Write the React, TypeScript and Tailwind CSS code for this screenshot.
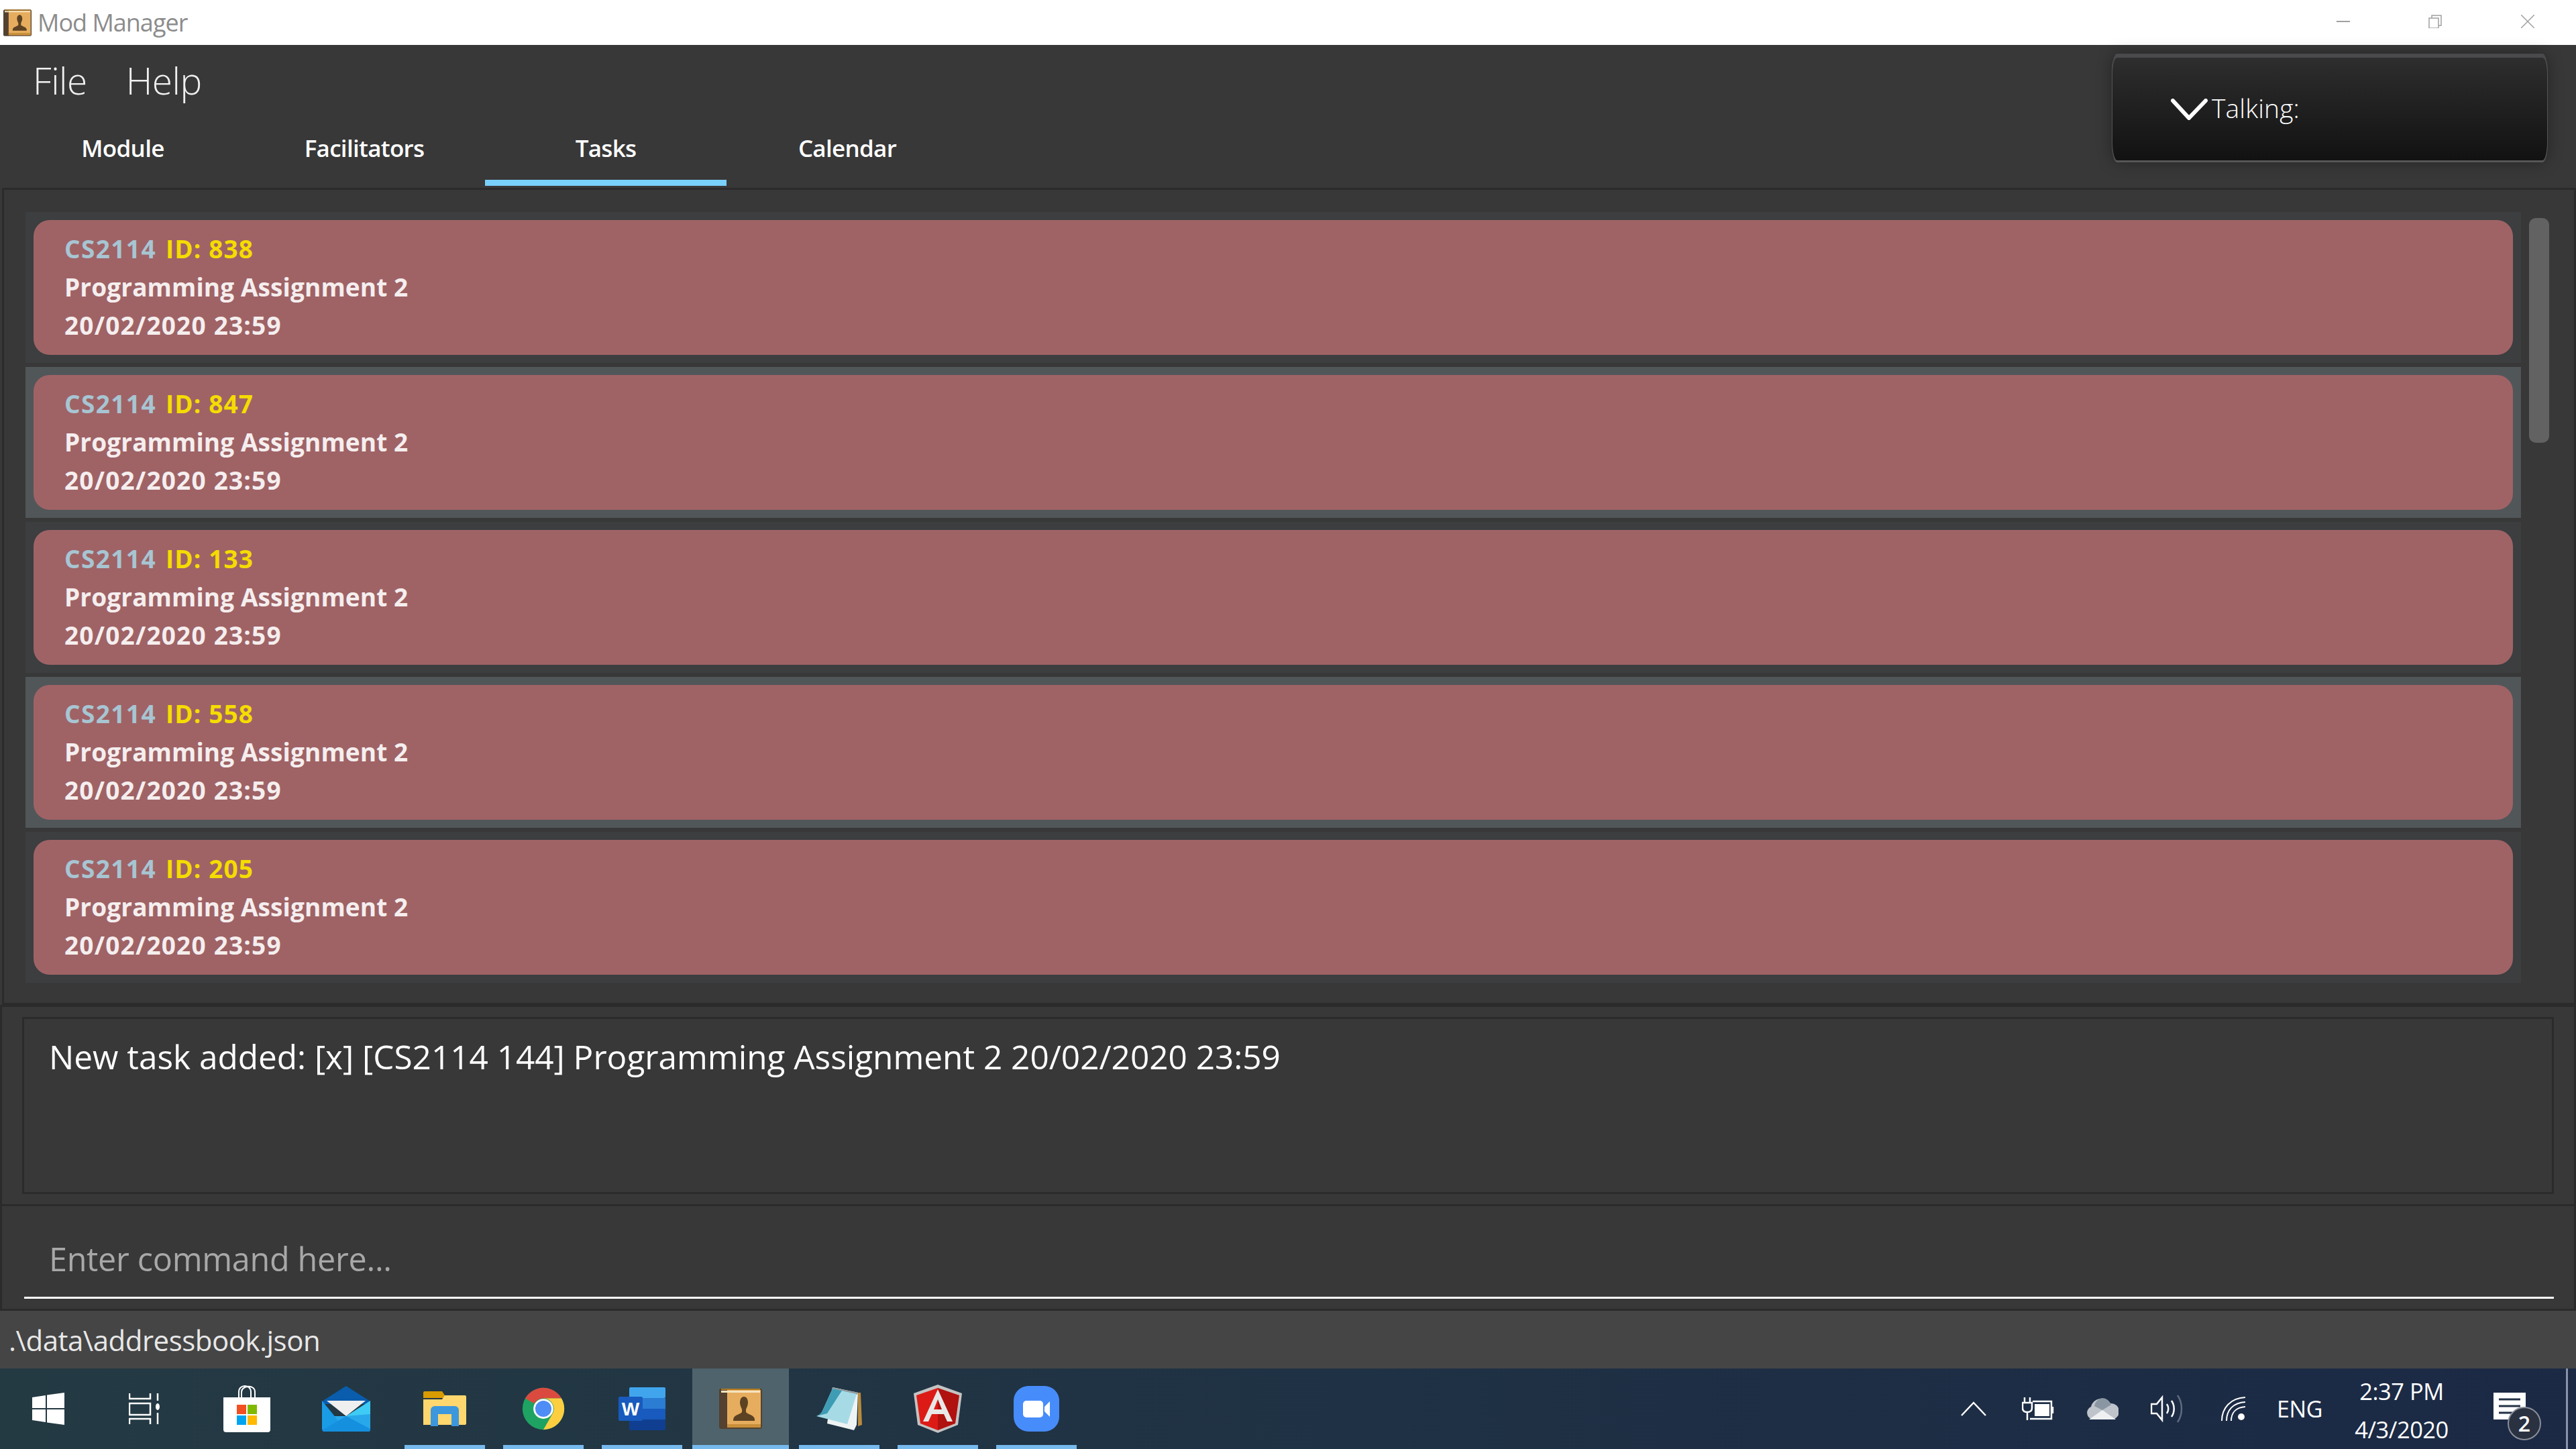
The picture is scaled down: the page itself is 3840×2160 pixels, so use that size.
const font = "font-['Open_Sans','Noto_Sans',sans-serif]";

const tasks = [
  { id: 838, selected: false },
  { id: 847, selected: true },
  { id: 133, selected: false },
  { id: 558, selected: true },
  { id: 205, selected: false },
];

const tabs = ['Module', 'Facilitators', 'Tasks', 'Calendar'];

function ContactBook({ className }: { className: string }) {
  return (
    <svg viewBox="0 0 64 60" className={className}>
      <rect x="0" y="0" width="64" height="60" rx="3" fill="#54412f" />
      <rect x="12" y="2" width="50" height="56" fill="#e6ad5e" />
      <rect x="3" y="3" width="58" height="3" fill="#f5e3bd" />
      <rect x="3" y="0" width="58" height="2" fill="#b07a24" />
      <rect x="12" y="53" width="50" height="5" fill="#c98f3a" />
      <path d="M37 12c-4 0-6 4-6 9 0 4 2 7 3 10v4c-2 3-10 4-12 8-1 2-1 4-1 5h32c0-2 0-4-1-5-2-4-10-5-12-8v-4c1-3 3-6 3-10 0-5-2-9-6-9z" fill="#5c4223" />
    </svg>
  );
}

function Slot({ running, active, children }: { running?: boolean; active?: boolean; children: React.ReactNode }) {
  return (
    <div className={`relative flex h-[120px] w-[144px] items-center justify-center ${active ? 'bg-[#4e636b]' : ''}`}>
      {children}
      {running && <div className={`absolute bottom-0 h-[6px] bg-[#76b9ed] ${active ? 'w-[144px]' : 'w-[120px]'}`} />}
    </div>
  );
}

function WindowsLogo() {
  return (
    <svg viewBox="0 0 48 48" className="h-[48px] w-[48px]" fill="#fff">
      <path d="M0 7l20-3v19H0zM22 3.600L48 0v23H22zM0 25h20v19L0 41zM22 25h26v23l-26-3.600z" />
    </svg>
  );
}

function TaskView() {
  return (
    <svg viewBox="0 0 46 46" className="ml-[-2px] h-[46px] w-[46px]" fill="none" stroke="#fff" strokeWidth="2.500">
      <path d="M1 0v8h31V0M1 46v-8h31v8" />
      <rect x="1" y="15" width="31" height="17" />
      <path d="M43 0v11M43 29v17" />
      <ellipse cx="43" cy="20" rx="3" ry="5" fill="#fff" stroke="none" />
    </svg>
  );
}

function Store() {
  return (
    <svg viewBox="0 0 70 70" className="ml-[-2px] h-[70px] w-[70px]">
      <path d="M23 18V10c0-12 18-12 18 0v8M27 18V10c0-10 20-12 20 0v8" fill="none" stroke="#fff" strokeWidth="2" />
      <path d="M0 18h70v48a4 4 0 0 1-4 4H4a4 4 0 0 1-4-4z" fill="#fff" />
      <rect x="20" y="29" width="14" height="14" fill="#f25022" />
      <rect x="36" y="29" width="14" height="14" fill="#7fba00" />
      <rect x="20" y="45" width="14" height="14" fill="#00a4ef" />
      <rect x="36" y="45" width="14" height="14" fill="#ffb900" />
    </svg>
  );
}

function Mail() {
  return (
    <svg viewBox="0 0 72 68" className="h-[68px] w-[72px]">
      <path d="M36 0l36 23v4H0v-4z" fill="#0a5cad" />
      <path d="M0 22l36 44H2a2 2 0 0 1-2-2z" fill="#1a9be6" />
      <path d="M72 22v20L54 52 36 45z" fill="#3ecbf5" />
      <path d="M36 45l36-3v24H36L18 45z" fill="#28a8ea" />
      <path d="M36 45l36 19v2a2 2 0 0 1-2 2H2l-2-2z" fill="#1490df" />
      <path d="M7 22h58L36 45z" fill="#efefef" />
    </svg>
  );
}

function Folder() {
  return (
    <svg viewBox="0 0 64 52" className="h-[52px] w-[64px]">
      <path d="M0 2a2 2 0 0 1 2-2h26l4 6v4H0z" fill="#d99b00" />
      <path d="M0 50V12h28l4-6h30a2 2 0 0 1 2 2v40a2 2 0 0 1-2 2H2z" fill="#ffd76e" />
      <path d="M11 52V28a6 6 0 0 1 6-6h30a6 6 0 0 1 6 6v24H42V34H22v18z" fill="#3d97dd" />
    </svg>
  );
}

function Chrome() {
  return (
    <svg viewBox="0 0 48 48" className="h-[68px] w-[68px]">
      <circle cx="24" cy="24" r="22" fill="#1ea362" />
      <path d="M4.950 13A22 22 0 0 1 43.050 13H24A11 11 0 0 0 14.470 18.500z" fill="#db4a3f" />
      <path d="M43.050 13A22 22 0 0 1 24 46L33.530 29.500A11 11 0 0 0 24 13z" fill="#fdcf40" />
      <circle cx="24" cy="24" r="10.500" fill="#fff" />
      <circle cx="24" cy="24" r="8.500" fill="#4e8df5" />
    </svg>
  );
}

function Word() {
  return (
    <svg viewBox="0 0 70 64" className="h-[64px] w-[70px]">
      <rect x="16" y="0" width="54" height="16" rx="2" fill="#41a5ee" />
      <rect x="16" y="16" width="54" height="16" fill="#2b7cd3" />
      <rect x="16" y="32" width="54" height="16" fill="#185abd" />
      <rect x="16" y="48" width="54" height="16" rx="2" fill="#103f91" />
      <rect x="0" y="14" width="36" height="36" rx="2" fill="#185abd" />
      <text x="18" y="42" textAnchor="middle" fontFamily="Liberation Sans, sans-serif" fontWeight="700" fontSize="28" fill="#fff">W</text>
    </svg>
  );
}

function Notepad() {
  return (
    <svg viewBox="0 0 68 64" className="h-[64px] w-[68px]">
      <path d="M62 8h4l2 48-6 2z" fill="#b88b3e" />
      <path d="M24 0l38 8-2 48-4 8-40-10z" fill="#eef3f4" />
      <path d="M24 0l38 8-1 3-38-8z" fill="#8f9a9e" />
      <path d="M24 2l36 8-14 45-46-12c5-2 7-4 9-8z" fill="#a6dbe6" />
      <path d="M24 2l14 3-22 34-16 4c5-2 7-4 9-8z" fill="#3e9cb4" />
    </svg>
  );
}

function Angular() {
  return (
    <svg viewBox="0 0 72 72" className="h-[72px] w-[72px]">
      <path d="M36 0l36 13-6 47-30 12L6 60 0 13z" fill="#c3c3c3" />
      <path d="M36 5L4 16l6 42 26 10z" fill="#dd1b16" />
      <path d="M36 5l32 11-6 42-26 10z" fill="#b0120f" />
      <path d="M36 7L14 55h8l5-11h18l5 11h8zM30 37l6-15 6 15z" fill="#e8e8e8" />
    </svg>
  );
}

function ZoomApp() {
  return (
    <svg viewBox="0 0 68 68" className="h-[68px] w-[68px]">
      <rect width="68" height="68" rx="22" fill="#478cfb" />
      <rect x="14" y="22" width="30" height="25" rx="5" fill="#fff" />
      <path d="M46 31l8-8v23l-8-8z" fill="#fff" />
    </svg>
  );
}

function Tray({ width, children }: { width: string; children: React.ReactNode }) {
  return <div className={`flex h-[120px] items-center justify-center ${width}`}>{children}</div>;
}

export default function App() {
  return (
    <div className={`flex h-[2160px] w-[3840px] flex-col overflow-hidden bg-[#383838] text-white ${font}`}>
      {/* Title bar */}
      <div className="flex h-[67px] flex-none items-center bg-white pl-[5px]">
        <ContactBook className="h-[40px] w-[42px]" />
        <span className="ml-[9px] text-[36px] tracking-[-1px] text-[#8c8c8c]">Mod Manager</span>
        <div className="ml-auto flex items-center pb-[3px] pr-[62px]">
          <div className="h-[2px] w-[20px] bg-[#a0a0a0]" />
          <svg viewBox="0 0 20 20" className="ml-[117px] h-[20px] w-[20px]" fill="none" stroke="#a0a0a0" strokeWidth="1.500">
            <rect x="1" y="5" width="14" height="15" />
            <path d="M5 5V1h14v15h-4" />
          </svg>
          <svg viewBox="0 0 20 20" className="ml-[118px] h-[20px] w-[20px]" fill="none" stroke="#a0a0a0" strokeWidth="1.500">
            <path d="M0 0l20 20M20 0L0 20" />
          </svg>
        </div>
      </div>

      {/* Menu and tabs */}
      <div className="flex h-[213px] flex-none justify-between">
        <div>
          <div className="flex h-[110px] items-center gap-[58px] pb-[4px] pl-[49px] text-[55px] font-light tracking-[-0.5px] text-[#f0f0f0]">
            <span>File</span>
            <span>Help</span>
          </div>
          <div className="flex pl-[3px]">
            {tabs.map((tab) => (
              <div key={tab} className={`flex h-[100px] w-[360px] items-center justify-center border-b-[9px] pb-[3px] text-[35px] font-semibold tracking-[-0.7px] ${tab === 'Tasks' ? 'border-[#79d0fb]' : 'border-transparent'}`}>
                {tab}
              </div>
            ))}
          </div>
        </div>
        <div className="mr-[42px] mt-[13px] flex h-[162px] w-[650px] items-center rounded-[8px/30px] border-x border-t-[6px] border-b-[3px] border-x-[#555555] border-t-[#4a4a4d] border-b-[#565656] bg-gradient-to-b from-[#2e2e2e] to-[#121212] pl-[87px] shadow-[0_0_22px_rgba(0,0,0,0.35)]">
          <svg viewBox="0 0 55 32" className="h-[32px] w-[55px] flex-none" fill="none" stroke="#fff" strokeWidth="6" strokeLinecap="round" strokeLinejoin="round">
            <path d="M3 3l24 26L52 3" />
          </svg>
          <span className="ml-[6px] pb-[2px] text-[39px] font-light tracking-[0.1px]">Talking:</span>
        </div>
      </div>

      {/* Task list */}
      <div className="ml-[3px] flex h-[1218px] flex-none border-y-[3px] border-x-[3px] border-[#2b2b2b] pl-[32px] pt-[33px]">
        <div className="flex w-[3720px] flex-col gap-[6px]">
          {tasks.map((task) => (
            <div key={task.id} className={`h-[225px] p-[12px] ${task.selected ? 'bg-[#515659]' : 'bg-[#3c3e40]'}`}>
              <div className="h-[201px] rounded-[24px] bg-[#9f6366] pl-[46px] pt-[14px] text-[37px] font-bold leading-[57px] text-[#f5eeee]">
                <div className="flex gap-[14px]">
                  <span className="tracking-[1.4px] text-[#a7c5d2]">CS2114</span>
                  <span className="tracking-[1.1px] text-[#f5dc00]">ID: {task.id}</span>
                </div>
                <div className="tracking-[0.1px]">Programming Assignment 2</div>
                <div className="tracking-[1.2px]">20/02/2020 23:59</div>
              </div>
            </div>
          ))}
        </div>
        <div className="ml-[12px] mt-[9px] h-[335px] w-[30px] rounded-[10px] bg-[#626262]" />
      </div>

      {/* Result box */}
      <div className="h-[300px] flex-none border-[3px] border-[#2b2b2b] px-[30px] py-[15px]">
        <div className="h-[264px] border-[3px] border-[#2b2b2b] pl-[37px] pt-[23px] text-[49.5px] font-normal leading-[66px] text-white">
          New task added: [x] [CS2114 144] Programming Assignment 2 20/02/2020 23:59
        </div>
      </div>

      {/* Command box */}
      <div className="h-[156px] flex-none border-x-[3px] border-b-[3px] border-[#2b2b2b] pl-[33px] pr-[30px] pt-[45px]">
        <div className="h-[93px] border-b-[3px] border-white pl-[37px] text-[48.5px] leading-[66px] tracking-[-0.3px] text-[#a8a8a8]">
          Enter command here...
        </div>
      </div>

      {/* Status bar */}
      <div className="flex h-[86px] flex-none items-center bg-[#454545] pl-[13px] text-[42px] tracking-[-0.5px] text-[#e8e8e8]">
        .\data\addressbook.json
      </div>

      {/* Taskbar */}
      <div className="flex h-[120px] flex-none bg-gradient-to-r from-[#243a43] to-[#1b2945]">
        <Slot><WindowsLogo /></Slot>
        <Slot><TaskView /></Slot>
        <div className="ml-[9px] flex gap-[3px]">
          <Slot><Store /></Slot>
          <Slot><Mail /></Slot>
          <Slot running><Folder /></Slot>
          <Slot running><Chrome /></Slot>
          <Slot running><Word /></Slot>
          <Slot running active><ContactBook className="h-[60px] w-[64px]" /></Slot>
          <Slot running><Notepad /></Slot>
          <Slot running><Angular /></Slot>
          <Slot running><ZoomApp /></Slot>
        </div>

        <div className="ml-auto flex">
          <Tray width="w-[96px]">
            <svg viewBox="0 0 38 22" className="h-[22px] w-[38px]" fill="none" stroke="#fff" strokeWidth="2.500"><path d="M1 21L19 2l18 19" /></svg>
          </Tray>
          <Tray width="w-[96px]">
            <svg viewBox="0 0 48 34" className="h-[34px] w-[48px]" fill="none" stroke="#fff" strokeWidth="2.500">
              <path d="M4 0v8M12 0v8M1 8h14v8c0 4-3 6-7 6s-7-2-7-6zM8 22v12" />
              <path d="M16 6h28v26H12" />
              <path d="M46 14v10" />
              <rect x="19" y="10" width="22" height="18" fill="#fff" stroke="none" />
            </svg>
          </Tray>
          <Tray width="w-[96px]">
            <svg viewBox="0 0 48 32" className="h-[32px] w-[48px]">
              <path d="M10 32a10 10 0 0 1-3-19A16 16 0 0 1 36 8a12 12 0 0 1 2 24z" fill="#bfc4cb" />
              <path d="M24 0a14 14 0 0 1 13 10L24 18 12 12A14 14 0 0 1 24 0z" fill="#8b96a3" />
              <path d="M4 32l20-14 20 14z" fill="#eef0f2" />
            </svg>
          </Tray>
          <Tray width="w-[96px]">
            <svg viewBox="0 0 48 42" className="h-[42px] w-[48px]" fill="none" stroke="#fff" strokeWidth="2.500">
              <path d="M1 14h8L17 4v34l-8-10H1z" />
              <path d="M24 14c3 4 3 10 0 14M31 9c5 7 5 17 0 24" />
              <path d="M40 1c8 11 8 29 0 40" stroke="#5f6a7d" />
            </svg>
          </Tray>
          <Tray width="w-[102px]">
            <svg viewBox="0 0 36 36" className="h-[36px] w-[36px]" fill="none" stroke="#fff" strokeWidth="2">
              <path d="M1 36C1 17 14 2 36 1M8 36C8 20 18 9 36 8M15 36C15 24 22 16 36 15" />
              <circle cx="30" cy="30" r="5" fill="#fff" stroke="none" />
            </svg>
          </Tray>
          <Tray width="w-[96px]">
            <span className="text-[34px] tracking-[-0.4px]">ENG</span>
          </Tray>
          <div className="flex w-[208px] flex-col items-center pt-[5px] text-[34.5px] leading-[57px] tracking-[-0.5px]">
            <span>2:37 PM</span>
            <span>4/3/2020</span>
          </div>
          <div className="relative flex w-[141px] items-start pl-[33px] pt-[36px]">
            <svg viewBox="0 0 48 40" className="h-[40px] w-[48px]">
              <path d="M0 0h48v40H0z" fill="#fff" />
              <path d="M8 10h32M8 20h32M8 30h20" stroke="#243247" strokeWidth="3" />
            </svg>
            <div className="absolute left-[54px] top-[57px] flex h-[50px] w-[50px] items-center justify-center rounded-full border-2 border-[#8a8f98] bg-[#2a3140] text-[32px] font-semibold">2</div>
          </div>
          <div className="w-[3px] bg-[#8a93a8]" />
          <div className="w-[12px]" />
        </div>
      </div>
    </div>
  );
}
